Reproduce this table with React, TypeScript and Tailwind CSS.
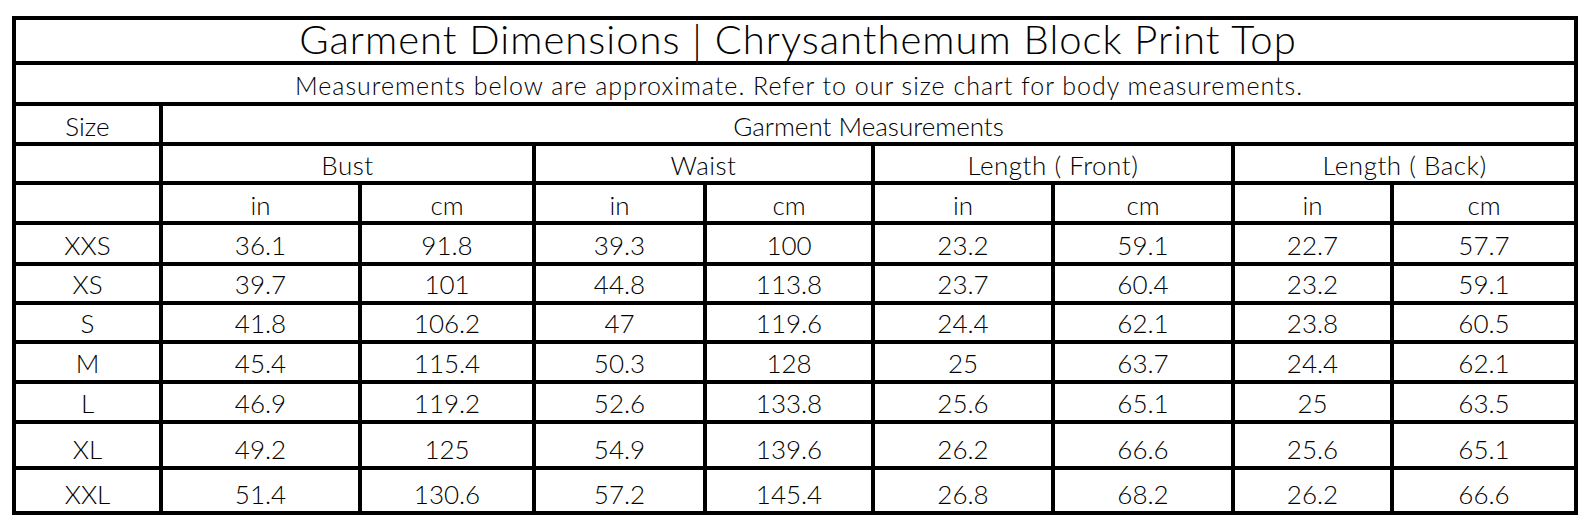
import React from "react";

const rows: string[][] = [
  ["XXS", "36.1", "91.8", "39.3", "100", "23.2", "59.1", "22.7", "57.7"],
  ["XS", "39.7", "101", "44.8", "113.8", "23.7", "60.4", "23.2", "59.1"],
  ["S", "41.8", "106.2", "47", "119.6", "24.4", "62.1", "23.8", "60.5"],
  ["M", "45.4", "115.4", "50.3", "128", "25", "63.7", "24.4", "62.1"],
  ["L", "46.9", "119.2", "52.6", "133.8", "25.6", "65.1", "25", "63.5"],
  ["XL", "49.2", "125", "54.9", "139.6", "26.2", "66.6", "25.6", "65.1"],
  ["XXL", "51.4", "130.6", "57.2", "145.4", "26.8", "68.2", "26.2", "66.6"],
];

const cell =
  "bg-white flex items-end justify-center leading-none text-black text-[26px] font-light pb-[3px]";

export default function App() {
  return (
    <div className="w-[1592px] h-[530px] bg-white pt-[16px] pl-[12px]" style={{ fontFamily: "Lato, 'Noto Sans', sans-serif" }}>
      <div
        className="inline-grid bg-black p-[4px] gap-[4px]"
        style={{
          gridTemplateColumns: "143px 195px 170px 167px 164px 176px 176px 155px 180px",
          gridTemplateRows: "41px 37px 36px 35px 36px 37px 35px 35px 36px 36px 42px 41px",
        }}
      >
        <div className="bg-white col-span-9 flex items-end justify-center leading-none text-black text-[40px] font-light pb-[2px] pl-[6px] tracking-[1px]">
          Garment Dimensions | Chrysanthemum Block Print Top
        </div>
        <div className="bg-white col-span-9 flex items-end justify-center leading-none text-black text-[25px] font-light pb-[4px] pl-[8px] tracking-[1px]">
          Measurements below are approximate. Refer to our size chart for body measurements.
        </div>
        <div className={cell}>Size</div>
        <div className={`${cell} col-span-8`}>Garment Measurements</div>
        <div className={cell}></div>
        <div className={`${cell} col-span-2 tracking-[0.5px]`}>Bust</div>
        <div className={`${cell} col-span-2 tracking-[0.5px]`}>Waist</div>
        <div className={`${cell} col-span-2 tracking-[0.5px]`}>Length ( Front)</div>
        <div className={`${cell} col-span-2 tracking-[0.5px]`}>Length ( Back)</div>
        <div className={cell}></div>
        {["in", "cm", "in", "cm", "in", "cm", "in", "cm"].map((u, i) => (
          <div key={i} className={cell}>{u}</div>
        ))}
        {rows.map((r, ri) =>
          r.map((v, ci) => (
            <div key={`${ri}-${ci}`} className={`${cell} pb-[4px]`}>
              {v}
            </div>
          ))
        )}
      </div>
    </div>
  );
}
